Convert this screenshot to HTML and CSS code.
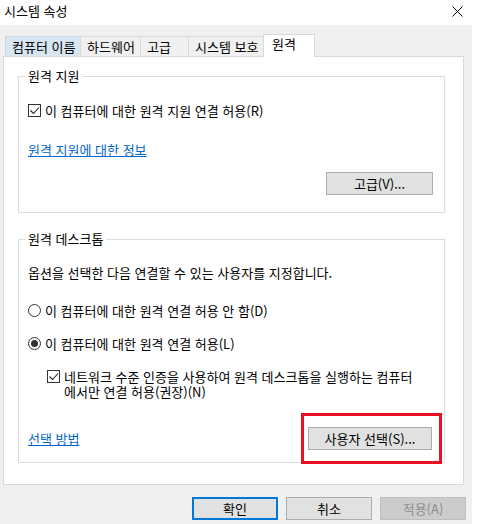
FILE: index.html
```html
<!DOCTYPE html>
<html lang="ko">
<head>
    <meta charset="UTF-8">
    <title>시스템 속성</title>
    <link rel="stylesheet" href="styles.css">
</head>
<body>

    <!-- Title bar -->
    <div class="titlebar">
        <span class="title">시스템 속성</span>
        <svg class="close" width="11" height="11" viewBox="0 0 11 11">
            <path d="M0.5 0.5 L10.5 10.5 M10.5 0.5 L0.5 10.5" stroke="#000" stroke-width="1" fill="none"/>
        </svg>
    </div>

    <div class="dialog">
        <!-- Tabs -->
        <div class="tabs">
            <div class="tab tab-name hover">컴퓨터 이름</div>
            <div class="tab tab-hw">하드웨어</div>
            <div class="tab tab-adv">고급</div>
            <div class="tab tab-prot">시스템 보호</div>
            <div class="tab tab-remote selected">원격</div>
        </div>

        <div class="panel">
            <!-- Remote assistance -->
            <fieldset class="group group-assist">
                <legend>원격 지원</legend>
                <div class="row check-row first-check">
                    <span class="box checked"><svg width="11" height="11" viewBox="0 0 11 11"><path d="M1.5 5.5 L4.5 8.5 L10 2.5" stroke="#222" stroke-width="1.1" fill="none"/></svg></span>
                    <span>이 컴퓨터에 대한 원격 지원 연결 허용(R)</span>
                </div>
                <div class="row link-row"><a href="#">원격 지원에 대한 정보</a></div>
                <div class="row btn-row">
                    <button class="btn btn-adv">고급(V)...</button>
                </div>
            </fieldset>

            <!-- Remote desktop -->
            <fieldset class="group group-desktop">
                <legend>원격 데스크톱</legend>
                <div class="row intro">옵션을 선택한 다음 연결할 수 있는 사용자를 지정합니다.</div>
                <div class="row check-row radio-first">
                    <span class="radio"></span>
                    <span>이 컴퓨터에 대한 원격 연결 허용 안 함(D)</span>
                </div>
                <div class="row check-row radio-second">
                    <span class="radio on"><span class="dot"></span></span>
                    <span>이 컴퓨터에 대한 원격 연결 허용(L)</span>
                </div>
                <div class="row check-row nla">
                    <span class="box checked"><svg width="11" height="11" viewBox="0 0 11 11"><path d="M1.5 5.5 L4.5 8.5 L10 2.5" stroke="#222" stroke-width="1.1" fill="none"/></svg></span>
                    <div class="nla-text">
                        <div class="nla-line">네트워크 수준 인증을 사용하여 원격 데스크톱을 실행하는 컴퓨터</div>
                        <div class="nla-line">에서만 연결 허용(권장)(N)</div>
                    </div>
                </div>
                <div class="row last-row">
                    <a href="#">선택 방법</a>
                    <button class="btn btn-users">사용자 선택(S)...</button>
                </div>
            </fieldset>
        </div>

        <!-- Dialog buttons -->
        <div class="actions">
            <button class="btn btn-ok">확인</button>
            <button class="btn">취소</button>
            <button class="btn disabled">적용(A)</button>
        </div>
    </div>

    <!-- Highlight annotation -->
    <div class="highlight"></div>

</body>
</html>
```

FILE: styles.css
```css
body {
    margin: 0;
    width: 487px;
    height: 524px;
    overflow: hidden;
    background: #fff;
    font-family: "Noto Sans CJK KR", "Noto Sans", sans-serif;
    font-size: 13px;
    color: #000;
    position: relative;
}

.titlebar {
    height: 25px;
    display: flex;
    align-items: center;
    justify-content: space-between;
    padding: 0 24px 4px 4px;
    box-sizing: border-box;
}

.title {
    line-height: 16px;
}

.close {
    display: block;
    margin-top: 1px;
}

.dialog {
    width: 472px;
    height: 499px;
    background: #f0f0f0;
    padding-top: 8px;
    box-sizing: border-box;
}

/* tabs */
.tabs {
    display: flex;
    align-items: flex-end;
    padding-left: 5px;
    height: 23px;
}

.tab {
    height: 20px;
    box-sizing: border-box;
    border: 1px solid #d9d9d9;
    border-bottom: none;
    margin-left: -1px;
    padding-left: 6px;
    line-height: 19px;
    background: #f0f0f0;
    white-space: nowrap;
}

.tab:first-child {
    margin-left: 0;
}

.tab.hover {
    background: #d8e6f2;
    border-color: #c5d6e6;
}

.tab-name { width: 76px; }
.tab-hw { width: 61px; }
.tab-adv { width: 49px; }
.tab-prot { width: 76px; }

.tab.selected {
    width: 52px;
    height: 23px;
    background: #fff;
    position: relative;
    z-index: 1;
    margin-bottom: -1px;
    padding-left: 8px;
    line-height: 18px;
}

.panel {
    margin-left: 3px;
    width: 461px;
    height: 429px;
    box-sizing: border-box;
    border: 1px solid #d9d9d9;
    background: #fff;
    padding: 11px 18px 0 14px;
}

/* group boxes */
.group {
    margin: 0;
    border: 1px solid #dcdcdc;
    padding: 0 11px 0 9px;
    min-width: 0;
}

.group legend {
    padding: 0 3px;
    margin-left: -3px;
    line-height: 16px;
}

.row {
    line-height: 16px;
    white-space: nowrap;
}

.check-row {
    display: flex;
    align-items: flex-start;
}

.box {
    width: 13px;
    height: 13px;
    box-sizing: border-box;
    border: 1px solid #333;
    background: #fff;
    margin: 1px 4px 0 0;
    display: flex;
    align-items: center;
    justify-content: center;
    flex: none;
}

.radio {
    width: 13px;
    height: 13px;
    box-sizing: border-box;
    border: 1px solid #333;
    border-radius: 50%;
    margin: 1px 4px 0 0;
    display: flex;
    align-items: center;
    justify-content: center;
    flex: none;
}

.radio .dot {
    width: 7px;
    height: 7px;
    border-radius: 50%;
    background: #333;
}

.first-check { margin-top: 19px; }

.link-row { margin-top: 23px; }

a {
    color: #0066cc;
    text-decoration: underline;
}

.btn-row {
    margin-top: 14px;
    display: flex;
    justify-content: flex-end;
    padding-bottom: 17px;
}

.btn {
    font-family: inherit;
    font-size: 13px;
    color: #000;
    height: 23px;
    box-sizing: border-box;
    background: #e1e1e1;
    border: 1px solid #adadad;
    padding: 0;
    line-height: 20px;
}

.btn-adv {
    width: 107px;
}

.group-desktop {
    margin-top: 18px;
}

.intro { margin-top: 18px; }
.radio-first { margin-top: 22px; }
.radio-second { margin-top: 17px; }

.nla {
    margin-top: 17px;
    margin-left: 19px;
}

.nla-line {
    height: 15px;
    line-height: 15px;
}

.last-row {
    margin-top: 28px;
    padding-bottom: 12px;
    display: flex;
    justify-content: space-between;
    align-items: center;
}

.btn-users {
    width: 124px;
    margin-right: 1px;
}

/* bottom buttons */
.actions {
    display: flex;
    justify-content: flex-end;
    gap: 8px;
    padding-right: 6px;
    margin-top: 12px;
}

.actions .btn {
    width: 86px;
}

.btn-ok {
    border: 2px solid #0078d7;
}

.btn.disabled {
    background: #cccccc;
    border-color: #bfbfbf;
    color: #8d8d8d;
}

/* red annotation box */
.highlight {
    position: absolute;
    left: 301px;
    top: 413px;
    width: 141px;
    height: 51px;
    box-sizing: border-box;
    border: 3px solid #e81123;
}
```
